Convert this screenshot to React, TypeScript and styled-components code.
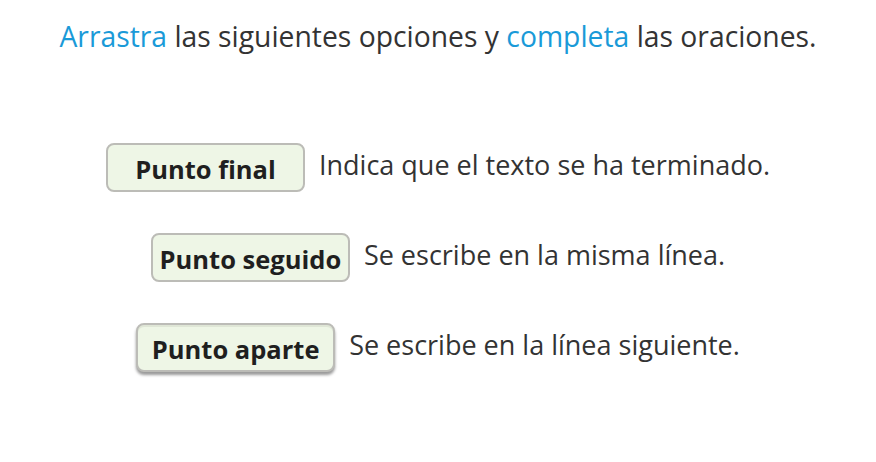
import React from "react";
import styled, { createGlobalStyle } from "styled-components";

const Global = createGlobalStyle`
  html, body { margin: 0; padding: 0; background: #ffffff; }
  body { font-family: "Open Sans", "Noto Sans", Arial, sans-serif; color: #333333; }
`;

const Page = styled.div`
  width: 876px;
  height: 462px;
  display: flex;
  flex-direction: column;
  align-items: center;
  box-sizing: border-box;
  padding-top: 16px;
`;

const Heading = styled.p`
  margin: 0;
  font-size: 28.3px;
  line-height: 40px;
  color: #333333;
  text-align: center;
`;

const Accent = styled.span`
  color: #1a9ad8;
`;

const List = styled.div`
  display: flex;
  flex-direction: column;
  align-items: center;
  gap: 41px;
  margin-top: 87px;
`;

const Row = styled.div`
  display: flex;
  align-items: center;
  gap: 14px;
`;

const Chip = styled.div<{ $lifted?: boolean }>`
  box-sizing: border-box;
  width: 199px;
  height: 49px;
  display: flex;
  align-items: center;
  justify-content: center;
  padding-top: 3px;
  border: 2px solid #bcbcb7;
  border-radius: 8px;
  background: #eef6e6;
  font-weight: 700;
  font-size: 25.5px;
  color: #1f1f1f;
  white-space: nowrap;
  box-shadow: ${(p) =>
    p.$lifted
      ? "inset 0 2px 0 #dfe6d6, 0 3px 3px rgba(0,0,0,0.4)"
      : "none"};
`;

const Sentence = styled.span`
  font-size: 27px;
  color: #333333;
  margin-top: -6px;
`;

const rows = [
  { chip: "Punto final", text: "Indica que el texto se ha terminado.", lifted: false },
  { chip: "Punto seguido", text: "Se escribe en la misma línea.", lifted: false },
  { chip: "Punto aparte", text: "Se escribe en la línea siguiente.", lifted: true },
];

export default function App() {
  return (
    <>
      <Global />
      <Page>
        <Heading>
          <Accent>Arrastra</Accent> las siguientes opciones y{" "}
          <Accent>completa</Accent> las oraciones.
        </Heading>
        <List>
          {rows.map((r) => (
            <Row key={r.chip}>
              <Chip $lifted={r.lifted}>{r.chip}</Chip>
              <Sentence>{r.text}</Sentence>
            </Row>
          ))}
        </List>
      </Page>
    </>
  );
}
